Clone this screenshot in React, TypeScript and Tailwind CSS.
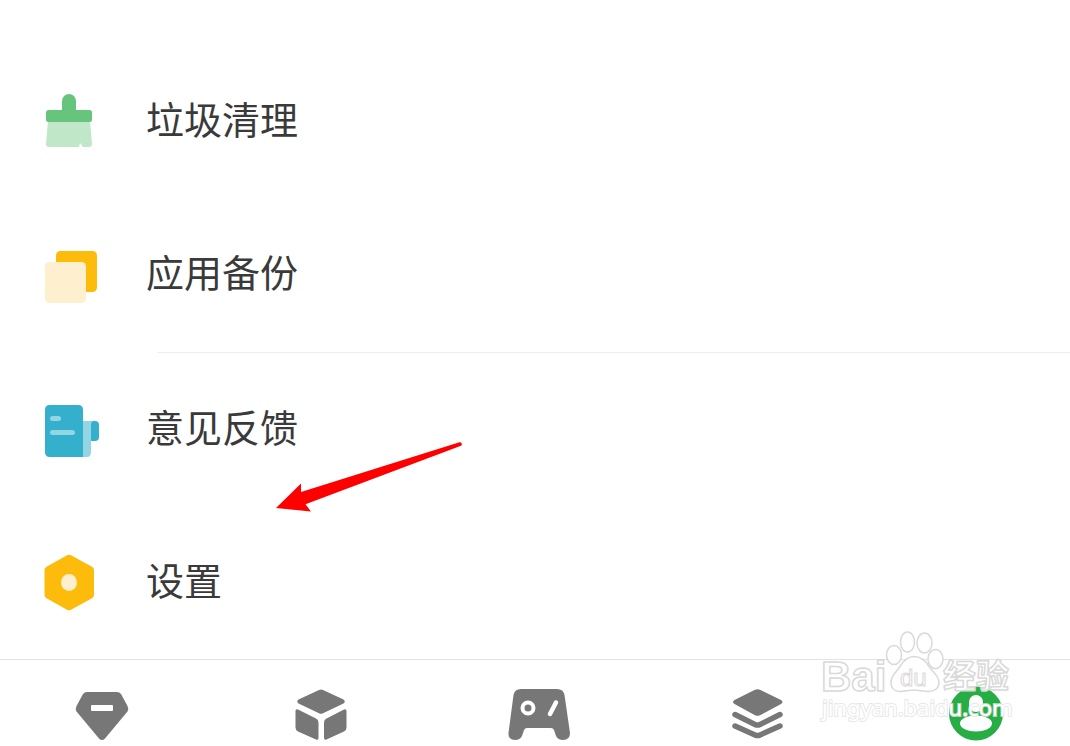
import type { ReactNode } from "react"

type RowProps = {
  label: string
  icon: ReactNode
}

type TabProps = {
  name: string
  active?: boolean
  children: ReactNode
}

const CleanIcon = () => (
  <svg viewBox="0 0 59 59" className="size-[59px] shrink-0" aria-hidden="true">
    <path d="M6 29h42l2 23q0 3-3 3h-6l-3-4-1 4H7q-3 0-3-3z" fill="#bfe7c8" />
    <rect x="20" y="2" width="14" height="24" rx="7" fill="#67c47c" />
    <rect x="4" y="18" width="46" height="12" rx="2.5" fill="#67c47c" />
  </svg>
)

const BackupIcon = () => (
  <svg viewBox="0 0 59 59" className="size-[59px] shrink-0" aria-hidden="true">
    <rect x="14" y="6" width="41" height="41" rx="4.5" fill="#fdbc0b" />
    <rect x="3" y="17" width="41" height="41" rx="4.5" fill="#fef0ce" />
  </svg>
)

const FeedbackIcon = () => (
  <svg viewBox="0 0 59 59" className="size-[59px] shrink-0" aria-hidden="true">
    <rect x="46" y="21" width="11" height="20" rx="4" fill="#34b0cd" />
    <path d="M40 21h11q-2 1-2 4v27q0 5-4 5h-5z" fill="#92d5e3" />
    <rect x="3" y="5" width="38" height="52" rx="4.5" fill="#34b0cd" />
    <path d="M37 50h4v7h-4z" fill="#34b0cd" />
    <rect x="8" y="16" width="11" height="5" rx="2.5" fill="#92d5e3" />
    <rect x="8" y="30" width="25" height="5" rx="2.5" fill="#92d5e3" />
  </svg>
)

const SettingsIcon = () => (
  <svg viewBox="0 0 59 59" className="size-[59px] shrink-0" aria-hidden="true">
    <path
      d="M25 2.3q2-1.3 4 0l21 11.5q2 1.2 2 3.2v25q0 2-2 3.2L29 56.7q-2 1.3-4 0L4.5 45.2q-2-1.2-2-3.2V17q0-2 2-3.2z"
      fill="#fdbc0b"
    />
    <ellipse cx="27" cy="29.5" rx="8" ry="8.5" fill="#fef0ce" />
  </svg>
)

const Row = ({ label, icon }: RowProps) => {
  return (
    <li>
      <button
        type="button"
        className="flex h-[153px] w-full items-center gap-[45px] pl-[42px] text-left"
      >
        {icon}
        <span className="pb-[7px] text-[38px] leading-[56px] text-[#3a3a3a]">
          {label}
        </span>
      </button>
    </li>
  )
}

const Tab = ({ name, active, children }: TabProps) => {
  return (
    <button
      type="button"
      aria-label={name}
      aria-current={active ? "page" : undefined}
      className={active ? "text-[#26ad43]" : "text-[#777777]"}
    >
      <svg
        viewBox="0 0 64 60"
        fill="currentColor"
        className="h-[60px] w-16 overflow-visible"
        aria-hidden="true"
      >
        {children}
      </svg>
    </button>
  )
}

const Arrow = () => (
  <svg
    viewBox="0 0 190 74"
    className="pointer-events-none absolute top-[87px] left-[274px] h-[74px] w-[190px]"
    aria-hidden="true"
  >
    <path
      d="M2 68 27 43.5V52L185.5 2.2a2 2 0 0 1 1.5 3.6L31.5 64.3 37 71.5z"
      fill="#ff0000"
    />
  </svg>
)

const Watermark = () => (
  <svg
    viewBox="0 0 200 100"
    className="pointer-events-none absolute -top-8 right-[52px] h-[100px] w-[200px] overflow-visible"
  >
    <g
      fill="#ffffff"
      fillOpacity="0.9"
      stroke="#d9d9d9"
      strokeWidth="1.5"
      strokeLinejoin="round"
    >
      <ellipse cx="76" cy="28" rx="7.5" ry="9.5" />
      <ellipse cx="89.5" cy="15" rx="7" ry="10" />
      <ellipse cx="106.5" cy="16" rx="7.5" ry="10" />
      <ellipse cx="117.5" cy="32" rx="7.5" ry="9.5" />
      <path d="M96 29.500c-7 0-11 5-14 10-4 6-9 9-9 16 0 6 4 9 9 9 5 0 9-1.500 14-1.500s9 1.500 14 1.500c6 0 11-3 11-9 0-7-6-10-10-16-3-5-8-10-15-10z" />
      <g className="font-['Liberation_Sans','Noto_Sans_CJK_SC',sans-serif] font-bold">
        <text x="3" y="64" className="text-[42px]">
          Bai
        </text>
        <text x="82" y="59" strokeWidth="1" className="text-[24px] font-normal">
          du
        </text>
        <text x="125" y="61" className="text-[33px]">
          经验
        </text>
      </g>
    </g>
    <text
      x="4"
      y="89"
      fill="#ffffff"
      stroke="#e2e2e2"
      strokeWidth="2"
      strokeOpacity="0.8"
      paintOrder="stroke"
      className="font-['Noto_Sans',sans-serif] text-[22px]"
    >
      jingyan.baidu.com
    </text>
  </svg>
)

const App = () => {
  return (
    <div className="bg-white font-['Noto_Sans_CJK_SC',sans-serif]">
      <main className="pt-[45px]">
        <ul>
          <Row label="垃圾清理" icon={<CleanIcon />} />
          <Row label="应用备份" icon={<BackupIcon />} />
        </ul>
        <hr className="mt-px ml-[157px] border-[#eeeeee]" />
        <div className="relative">
          <ul>
            <Row label="意见反馈" icon={<FeedbackIcon />} />
            <Row label="设置" icon={<SettingsIcon />} />
          </ul>
          <Arrow />
        </div>
      </main>
      <footer className="relative">
        <nav className="flex justify-between border-t border-[#e3e3e3] pt-6 pr-[62px] pl-[70px]">
          <Tab name="推荐">
            <path d="M17 8h30q2.500 0 4 2l6.500 12q1.500 3 0 5.500L35 54.500q-3 3-6 0L6.500 27.500q-1.500-2.500 0-5.500L13 10q1.500-2 4-2z" />
            <rect x="21" y="21" width="22" height="6" rx="1" fill="#ffffff" />
          </Tab>
          <Tab name="应用">
            <path d="M30 6q2-1.200 4 0l20.500 9.500q2.500 2 0 4L34 29.300q-2 1-4 0L9.500 19.500q-2.500-2 0-4z" />
            <path d="M6.500 27q0-2.500 2.500-1.500l18 9q2.500 1.200 2.500 4V54q0 2.500-2.500 1.500L9 47.500q-2.500-1.200-2.500-4z" />
            <path d="M57.500 27q0-2.500-2.500-1.500l-17.500 9Q35 35.700 35 38.500V54q0 2.500 2.500 1.500l17.500-8q2.500-1.200 2.500-4z" />
          </Tab>
          <Tab name="游戏">
            <path d="M14 5h36q6.500 0 7.500 6l5.500 38q0 7-7 7-5 0-7-4l-2-6q-1-2-3-2H20q-2 0-3 2l-2 6q-2 4-7 4-7 0-6.500-7L6.500 11Q7.500 5 14 5z" />
            <circle cx="21" cy="24" r="5.500" fill="none" stroke="#ffffff" strokeWidth="4" />
            <path d="m49 18.500-6 11.500" stroke="#ffffff" strokeWidth="4.500" strokeLinecap="round" />
          </Tab>
          <Tab name="软件">
            <path d="M29 5.700q2.500-1 5 0L55 16q3 2 0 4L34 31.300q-2.500 1-5 0L8.500 20q-3-2 0-4z" />
            <path
              d="m9 30.500 20 10q2.500 1.200 5 0l20-10M9 42l20 9q2.500 1.200 5 0l20-9"
              fill="none"
              stroke="currentColor"
              strokeWidth="5.500"
              strokeLinecap="round"
            />
          </Tab>
          <Tab name="我的" active>
            <circle cx="32" cy="29.500" r="27" />
            <rect x="25" y="11" width="14" height="17" rx="7" fill="#ffffff" />
            <ellipse cx="32" cy="39.500" rx="16" ry="8" fill="#ffffff" />
          </Tab>
        </nav>
        <Watermark />
      </footer>
    </div>
  )
}

export default App
